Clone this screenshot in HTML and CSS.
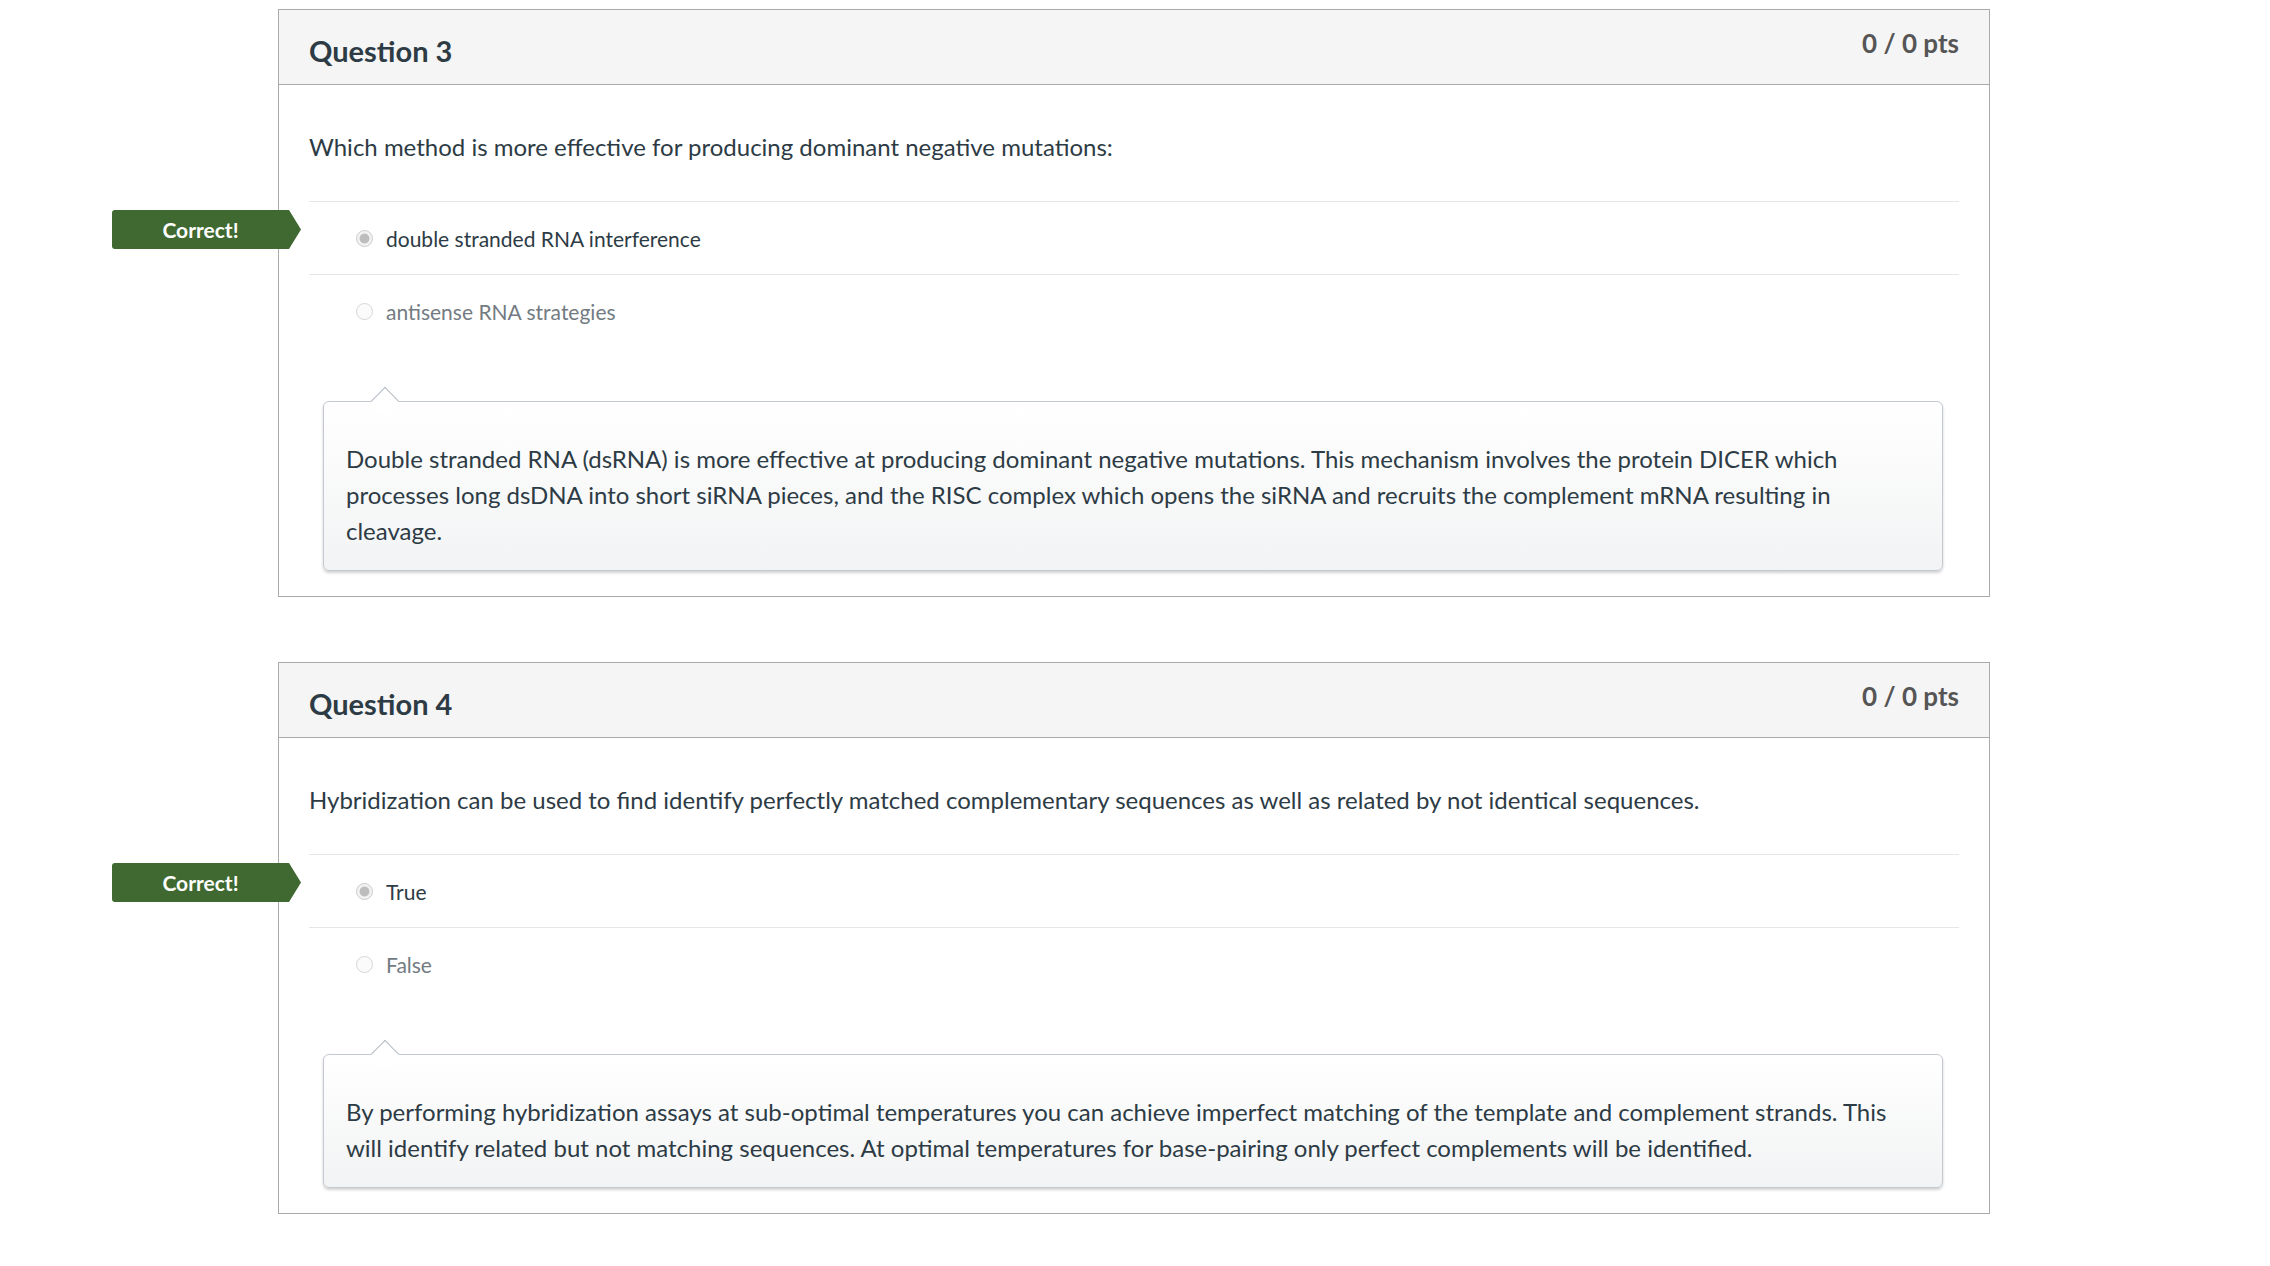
FILE: index.html
```html
<!DOCTYPE html>
<html lang="en">
<head>
<meta charset="utf-8">
<title>Quiz results</title>
<link rel="stylesheet" href="styles.css">
</head>
<body>
<div class="page">
  <div class="question">
    <div class="q-header">
      <div class="q-name">Question 3</div>
      <div class="q-points">0 / 0 pts</div>
    </div>
    <div class="q-body">
      <div class="q-text">Which method is more effective for producing dominant negative mutations:</div>
      <div class="answers">
        <div class="answer selected">
          <div class="badge">Correct!</div>
          <span class="radio on"></span>
          <span class="answer-text">double stranded RNA interference</span>
        </div>
        <div class="answer">
          <span class="radio"></span>
          <span class="answer-text">antisense RNA strategies</span>
        </div>
      </div>
      <div class="comment">Double stranded RNA (dsRNA) is more effective at producing dominant negative mutations. This mechanism involves the protein DICER which processes long dsDNA into short siRNA pieces, and the RISC complex which opens the siRNA and recruits the complement mRNA resulting in cleavage.</div>
    </div>
  </div>

  <div class="question">
    <div class="q-header">
      <div class="q-name">Question 4</div>
      <div class="q-points">0 / 0 pts</div>
    </div>
    <div class="q-body">
      <div class="q-text">Hybridization can be used to find identify perfectly matched complementary sequences as well as related by not identical sequences.</div>
      <div class="answers">
        <div class="answer selected">
          <div class="badge">Correct!</div>
          <span class="radio on"></span>
          <span class="answer-text">True</span>
        </div>
        <div class="answer">
          <span class="radio"></span>
          <span class="answer-text">False</span>
        </div>
      </div>
      <div class="comment">By performing hybridization assays at sub-optimal temperatures you can achieve imperfect matching of the template and complement strands. This will identify related but not matching sequences. At optimal temperatures for base-pairing only perfect complements will be identified.</div>
    </div>
  </div>
</div>
</body>
</html>
```

FILE: styles.css
```css
* { box-sizing: border-box; }

html, body {
  margin: 0;
  padding: 0;
  background: #ffffff;
}

body {
  font-family: Lato, "Noto Sans", "Liberation Sans", sans-serif;
  color: #2d3b45;
}

.page {
  padding: 9px 0 0 278px;
}

.question {
  width: 1712px;
  border: 1px solid #aaaaaa;
  margin-bottom: 65px;
  background: #ffffff;
}

.q-header {
  height: 75px;
  background: #f5f5f5;
  border-bottom: 1px solid #aaaaaa;
  padding: 0 30px 0 30px;
  display: flex;
  justify-content: space-between;
  align-items: flex-start;
}

.q-name {
  font-size: 29px;
  line-height: 36px;
  font-weight: 700;
  margin-top: 23px;
  color: #2d3b45;
}

.q-points {
  font-size: 26px;
  line-height: 30px;
  font-weight: 700;
  margin-top: 18px;
  color: #555555;
}

.q-body {
  padding: 0 30px 25px 30px;
}

.q-text {
  font-size: 24px;
  line-height: 32px;
  margin: 46px 0 38px;
  color: #2d3b45;
}

.answers {
  display: flex;
  flex-direction: column;
}

.answer {
  position: relative;
  height: 73px;
  border-top: 1px solid #e6e6e6;
  display: flex;
  align-items: center;
  padding-left: 47px;
  padding-top: 2px;
  gap: 13px;
}

.answer-text {
  font-size: 21px;
  line-height: 28px;
  color: #737b82;
}

.answer.selected .answer-text {
  color: #2d3b45;
}

.radio {
  width: 17px;
  height: 17px;
  border-radius: 50%;
  border: 1px solid #d6d6d6;
  background: #fbfbfb;
  flex: none;
  margin-top: -2px;
}

.radio.on {
  border-color: #cccccc;
  background: radial-gradient(circle, #bdbdbd 0, #bdbdbd 4.4px, #f2f2f2 5.4px, #f2f2f2 100%);
}

.badge {
  position: absolute;
  left: -197px;
  top: 8px;
  width: 189px;
  height: 39px;
  padding-right: 12px;
  background: #3f6930;
  color: #ffffff;
  font-size: 21px;
  font-weight: 700;
  line-height: 39px;
  text-align: center;
  border-radius: 3px 0 0 3px;
  clip-path: polygon(0 0, calc(100% - 12px) 0, 100% 50%, calc(100% - 12px) 100%, 0 100%);
}

.comment {
  position: relative;
  margin: 54px 16px 0 14px;
  padding: 39px 21px 21px 22px;
  border: 1px solid #c3c9cf;
  border-radius: 6px;
  background: linear-gradient(#ffffff, #f2f3f4);
  box-shadow: 0 2px 3px rgba(0, 0, 0, 0.18);
  font-size: 24px;
  line-height: 36px;
  color: #2d3b45;
}

.comment::before {
  content: "";
  position: absolute;
  left: 51px;
  top: -11px;
  width: 19px;
  height: 19px;
  background: #ffffff;
  border-top: 1px solid #b3bcc4;
  border-left: 1px solid #b3bcc4;
  transform: rotate(45deg);
}
```
